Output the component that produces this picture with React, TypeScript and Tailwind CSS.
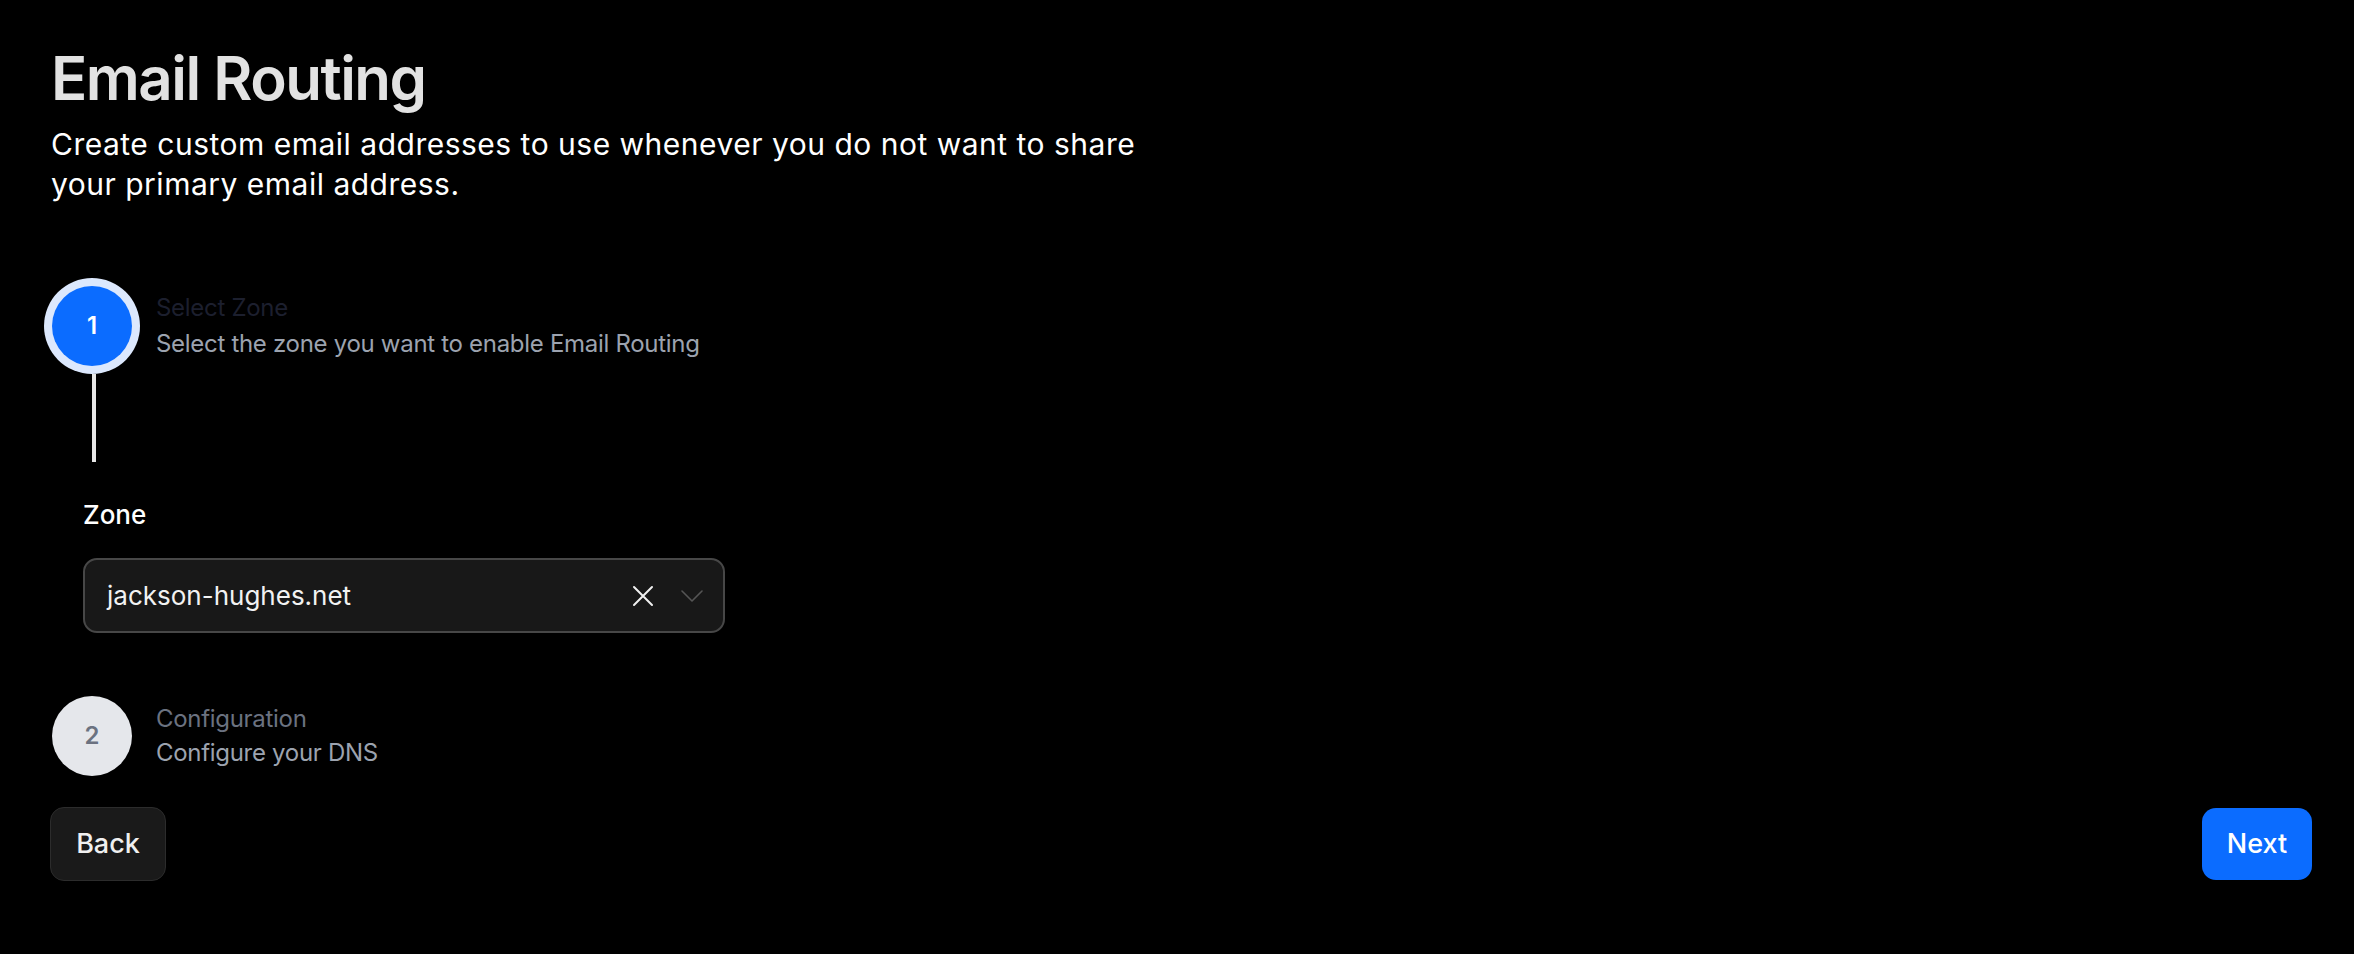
const FONT = "font-['Inter','Noto_Sans',sans-serif]";

function StepCircle({ n, active }: { n: number; active?: boolean }) {
    return (
        <div
            className={
                active
                    ? 'flex h-20 w-20 shrink-0 items-center justify-center rounded-full bg-[#0b6cff] text-2xl font-semibold text-white ring-8 ring-[#dce8fd]'
                    : 'flex h-20 w-20 shrink-0 items-center justify-center rounded-full bg-[#e5e7eb] text-2xl font-semibold text-[#6b7280]'
            }
        >
            {n}
        </div>
    );
}

export default function App() {
    return (
        <div className={`${FONT} min-h-screen bg-black`}>
            {/* Header */}
            <div className="pl-[51px] pt-12">
                <h1 className="text-6xl leading-[60px] font-semibold tracking-tight text-[#e2e2e2]">Email Routing</h1>
                <p className="mt-4 max-w-[1120px] text-[30px] leading-10 tracking-[0.5px] text-white">
                    Create custom email addresses to use whenever you do not want to share your primary email address.
                </p>
            </div>

            {/* Step 1 */}
            <div className="mt-[82px] flex items-center gap-6 pl-[52px]">
                <StepCircle n={1} active />
                <div className="flex flex-col tracking-[-0.3px]">
                    <span className="text-2xl leading-9 text-[#1c1f2e]">Select Zone</span>
                    <span className="text-2xl leading-9 text-[#9ca3af]">Select the zone you want to enable Email Routing</span>
                </div>
            </div>
            <div className="ml-[92px] mt-2 h-[88px] w-1 bg-[#e8e8e8]" />

            <div className="pl-[83px]">
                <label className="mt-[37px] block text-[26px] leading-8 font-medium text-white">Zone</label>
                <div className="mt-[27px] flex h-[75px] w-[642px] items-center rounded-[14px] border-2 border-[#474747] bg-[#181818] pl-[22px] pr-5">
                    <span className="flex-1 text-[26px] text-[#f2f2f2]">jackson-hughes.net</span>
                    <svg width="22" height="22" viewBox="0 0 22 22" fill="none" stroke="#f0f0f0" strokeWidth="2" strokeLinecap="round">
                        <path d="M2 2 L20 20 M20 2 L2 20" />
                    </svg>
                    <svg className="ml-[27px]" width="22" height="12" viewBox="0 0 22 12" fill="none" stroke="#555" strokeWidth="1.6" strokeLinecap="round" strokeLinejoin="round">
                        <path d="M1 1 L11 11 L21 1" />
                    </svg>
                </div>
            </div>

            {/* Step 2 */}
            <div className="mt-[63px] flex items-center gap-6 pl-[52px]">
                <StepCircle n={2} />
                <div className="flex flex-col tracking-[-0.3px]">
                    <span className="text-2xl leading-[34px] text-[#6b7280]">Configuration</span>
                    <span className="text-2xl leading-[34px] text-[#9ca3af]">Configure your DNS</span>
                </div>
            </div>

            {/* Footer */}
            <div className="mt-[31px] flex items-center justify-between pl-[50px] pr-[42px]">
                <button className="h-[74px] w-[116px] rounded-[14px] border border-[#2c2c2c] bg-[#1a1a1a] text-[27px] font-medium text-[#f0f0f0]">
                    Back
                </button>
                <button className="h-[72px] w-[110px] rounded-[14px] bg-[#0b6cff] text-[27px] font-medium text-white">
                    Next
                </button>
            </div>
        </div>
    );
}
